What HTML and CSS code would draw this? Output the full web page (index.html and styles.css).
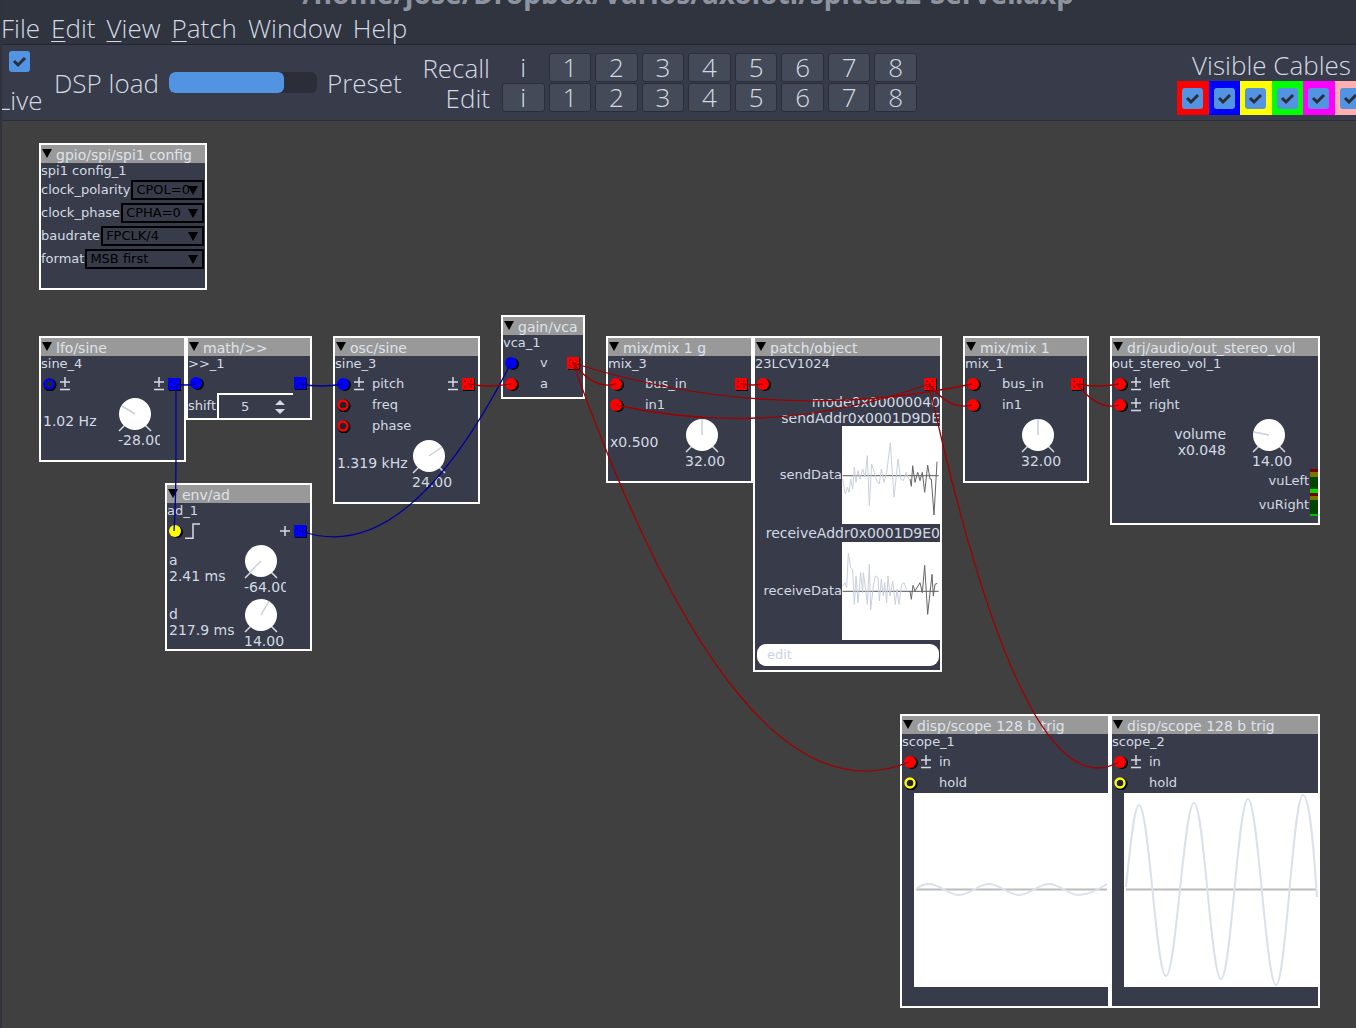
FILE: index.html
```html
<!DOCTYPE html>
<html lang="en">
<head>
<meta charset="utf-8">
<title>spitest2-Server.axp</title>
<link rel="stylesheet" href="styles.css">
</head>
<body>
<svg class="defs" aria-hidden="true">
  <symbol id="in" viewBox="0 0 14 14"><circle class="shade" cx="8" cy="8" r="6"/><circle cx="6" cy="7" r="6" fill="currentColor"/></symbol>
  <symbol id="in-open" viewBox="0 0 14 14"><circle cx="7" cy="8" r="5" fill="none" stroke="#000" stroke-width="3"/><circle cx="6" cy="7" r="4.5" fill="#20222c" stroke="currentColor" stroke-width="2.4"/></symbol>
  <symbol id="out" viewBox="0 0 14 14"><path class="shade" d="M2 2h12v12H2z"/><path d="M1 1h12v12H1z" fill="currentColor"/><path d="M3.500 3.500h1.500v1.500H3.500zM9 3.500h1.500v1.500H9zM3.500 9h1.500v1.500H3.500zM9 9h1.500v1.500H9zM6.300 6.300h1.500v1.500H6.300z" fill="#000" opacity=".55"/></symbol>
  <symbol id="pm" viewBox="0 0 12 14"><path d="M6 0v10M1 5h10M1 12.500h10" fill="none" stroke="#d3dae3" stroke-width="1.5"/></symbol>
  <symbol id="plus" viewBox="0 0 12 14"><path d="M6 2v10M1 7h10" fill="none" stroke="#d3dae3" stroke-width="1.5"/></symbol>
  <symbol id="step" viewBox="0 0 16 16"><path d="M0 15.300h8V1h7" fill="none" stroke="#d3dae3" stroke-width="1.5"/></symbol>
  <symbol id="knob" viewBox="0 0 40 37"><path d="M4 36l6-6M36 36l-6-6" stroke="#d3dae3" stroke-width="1.5"/><circle cx="20" cy="19" r="16" fill="#fff"/></symbol>
</svg>

<header class="titlebar">/home/jose/Dropbox/Varios/axoloti/spitest2-Server.axp</header>
<nav class="menubar">
  <button>File</button>
  <button><u>E</u>dit</button>
  <button><u>V</u>iew</button>
  <button><u>P</u>atch</button>
  <button>Window</button>
  <button>Help</button>
</nav>

<section class="toolbar">
  <label class="live"><input class="check" type="checkbox" checked><span>Live</span></label>
  <label class="dsp">DSP load <progress value="78" max="100"></progress></label>
  <span class="preset">Preset</span>
  <div class="preset-labels"><span>Recall</span><span>Edit</span></div>
  <div class="presets">
    <button class="flat">i</button><button>1</button><button>2</button><button>3</button><button>4</button><button>5</button><button>6</button><button>7</button><button>8</button>
    <button>i</button><button>1</button><button>2</button><button>3</button><button>4</button><button>5</button><button>6</button><button>7</button><button>8</button>
  </div>
  <fieldset class="cables-filter">
    <legend>Visible Cables</legend>
    <div class="swatches">
      <span class="sw-red"><input class="check" type="checkbox" aria-label="Red" checked></span>
      <span class="sw-blue"><input class="check" type="checkbox" aria-label="Blue" checked></span>
      <span class="sw-yellow"><input class="check" type="checkbox" aria-label="Yellow" checked></span>
      <span class="sw-green"><input class="check" type="checkbox" aria-label="Green" checked></span>
      <span class="sw-magenta"><input class="check" type="checkbox" aria-label="Magenta" checked></span>
      <span class="sw-pink"><input class="check" type="checkbox" aria-label="Pink" checked></span>
    </div>
  </fieldset>
</section>

<main class="canvas">
  <article class="node n-spi">
    <h2>gpio/spi/spi1 config</h2>
    <p class="name">spi1 config_1</p>
    <div class="attrs">
      <label>clock_polarity<span class="drop"><select><option>CPOL=0</option></select></span></label>
      <label>clock_phase<span class="drop"><select><option>CPHA=0</option></select></span></label>
      <label>baudrate<span class="drop"><select><option>FPCLK/4</option></select></span></label>
      <label>format<span class="drop"><select><option>MSB first</option></select></span></label>
    </div>
  </article>

  <article class="node n-lfo">
    <h2>lfo/sine</h2>
    <p class="name">sine_4</p>
    <div class="io"><svg class="port blue"><use href="#in-open"/></svg><svg class="sign"><use href="#pm"/></svg><span></span><svg class="sign"><use href="#pm"/></svg><svg class="port blue"><use href="#out"/></svg></div>
    <div class="param"><div class="read">1.02 Hz</div><div class="dial"><svg><use href="#knob"/><path class="needle" d="M20 19L7 11"/></svg><output>-28.00</output></div></div>
  </article>

  <article class="node n-math">
    <h2>math/&gt;&gt;</h2>
    <p class="name">&gt;&gt;_1</p>
    <div class="io"><svg class="port blue"><use href="#in"/></svg><span></span><svg class="port blue"><use href="#out"/></svg></div>
    <label class="shift">shift<span class="spin"><input type="number" value="5"><svg viewBox="0 0 10 14"><path d="M0 5L5 0L10 5zM0 9L5 14L10 9z" fill="#d3dae3"/></svg></span></label>
  </article>

  <article class="node n-osc">
    <h2>osc/sine</h2>
    <p class="name">sine_3</p>
    <div class="io"><svg class="port blue"><use href="#in"/></svg><svg class="sign"><use href="#pm"/></svg><span>pitch</span><svg class="sign"><use href="#pm"/></svg><svg class="port red"><use href="#out"/></svg></div>
    <div class="io"><svg class="port red"><use href="#in-open"/></svg><i class="sign"></i><span>freq</span></div>
    <div class="io"><svg class="port red"><use href="#in-open"/></svg><i class="sign"></i><span>phase</span></div>
    <div class="param"><div class="read">1.319 kHz</div><div class="dial"><svg><use href="#knob"/><path class="needle" d="M20 19L33 10"/></svg><output>24.00</output></div></div>
  </article>

  <article class="node n-vca">
    <h2>gain/vca</h2>
    <p class="name">vca_1</p>
    <div class="io"><svg class="port blue"><use href="#in"/></svg><i class="sign"></i><span>v</span><svg class="port red"><use href="#out"/></svg></div>
    <div class="io"><svg class="port red"><use href="#in"/></svg><i class="sign"></i><span>a</span></div>
  </article>

  <article class="node n-mix3">
    <h2>mix/mix 1 g</h2>
    <p class="name">mix_3</p>
    <div class="io"><svg class="port red"><use href="#in"/></svg><i class="sign"></i><span>bus_in</span><svg class="port red"><use href="#out"/></svg></div>
    <div class="io"><svg class="port red"><use href="#in"/></svg><i class="sign"></i><span>in1</span></div>
    <div class="param"><div class="read">x0.500</div><div class="dial"><svg><use href="#knob"/><path class="needle" d="M20 19V3"/></svg><output>32.00</output></div></div>
  </article>

  <article class="node n-patch">
    <h2>patch/object</h2>
    <p class="name">23LCV1024</p>
    <div class="io"><svg class="port red"><use href="#in"/></svg><span></span><svg class="port red"><use href="#out"/></svg></div>
    <p class="reg">mode0x00000040</p>
    <p class="reg">sendAddr0x0001D9DE</p>
    <div class="plot"><span>sendData</span>
      <svg viewBox="276 -9 294 294"><path class="axis" d="M278 140H566"/>
        <polyline class="trace" points="278,150 286,195 292,175 297,190 302,150 308,180 313,115 318,160 324,125 330,150 338,120 345,145 352,80 358,230 365,105 373,130 380,155 388,165 394,120 402,160 410,130 421,42 432,205 438,150 444,90 452,150 460,155 468,130 476,150"/>
        <polyline class="trace dark" points="480,150 484,172 488,110 495,160 503,130 510,155 517,130 524,190 533,108 540,150 544,150 552,258 561,98"/></svg></div>
    <p class="reg addr">receiveAddr0x0001D9E0</p>
    <div class="plot"><span>receiveData</span>
      <svg viewBox="276 338 294 294"><path class="axis" d="M278 486H566"/>
        <polyline class="trace" points="278,470 285,460 290,475 295,372 302,415 308,420 313,525 318,440 324,520 332,430 338,490 340,430 347,480 352,525 358,405 362,542 370,470 376,440 384,445 388,515 394,450 400,500 404,460 410,520 414,440 420,500 428,455 436,525 441,480 447,525 455,465 462,460 470,480"/>
        <polyline class="trace dark" points="480,485 484,510 489,468 495,485 510,460 517,490 524,408 533,555 546,435 550,500 555,465 562,462"/></svg></div>
    <button class="edit">edit</button>
  </article>

  <article class="node n-mix1">
    <h2>mix/mix 1</h2>
    <p class="name">mix_1</p>
    <div class="io"><svg class="port red"><use href="#in"/></svg><i class="sign"></i><span>bus_in</span><svg class="port red"><use href="#out"/></svg></div>
    <div class="io"><svg class="port red"><use href="#in"/></svg><i class="sign"></i><span>in1</span></div>
    <div class="param"><div class="read"></div><div class="dial"><svg><use href="#knob"/><path class="needle" d="M20 19V3"/></svg><output>32.00</output></div></div>
  </article>

  <article class="node n-vol">
    <h2>drj/audio/out_stereo_vol</h2>
    <p class="name">out_stereo_vol_1</p>
    <div class="io"><svg class="port red"><use href="#in"/></svg><svg class="sign"><use href="#pm"/></svg><span>left</span></div>
    <div class="io"><svg class="port red"><use href="#in"/></svg><svg class="sign"><use href="#pm"/></svg><span>right</span></div>
    <div class="param"><div class="read end">volume<br>x0.048</div><div class="dial"><svg><use href="#knob"/><path class="needle" d="M20 19L5 16"/></svg><output>14.00</output></div></div>
    <div class="vu">vuLeft<svg viewBox="0 0 8 24"><path fill="#700" d="M0 0h8v3H0z"/><path fill="#770" d="M0 3h8v5H0z"/><path fill="#040" d="M0 8h8v12H0z"/><path fill="#0d0" d="M0 20h8v4H0z"/></svg></div>
    <div class="vu">vuRight<svg viewBox="0 0 8 24"><path fill="#700" d="M0 0h8v3H0z"/><path fill="#770" d="M0 3h8v4H0z"/><path fill="#040" d="M0 7h8v14H0z"/><path fill="#0b0" d="M0 21h8v2H0z"/></svg></div>
  </article>

  <article class="node n-env">
    <h2>env/ad</h2>
    <p class="name">ad_1</p>
    <div class="io"><svg class="port yellow"><use href="#in"/></svg><svg class="step"><use href="#step"/></svg><span></span><svg class="sign"><use href="#plus"/></svg><svg class="port blue"><use href="#out"/></svg></div>
    <div class="param"><div class="read">a<br>2.41 ms</div><div class="dial"><svg><use href="#knob"/><path class="needle" d="M20 19L9 30"/></svg><output>-64.00</output></div></div>
    <div class="param"><div class="read">d<br>217.9 ms</div><div class="dial"><svg><use href="#knob"/><path class="needle" d="M20 19L28 5"/></svg><output>14.00</output></div></div>
  </article>

  <article class="node n-scope1">
    <h2>disp/scope 128 b trig</h2>
    <p class="name">scope_1</p>
    <div class="io"><svg class="port red"><use href="#in"/></svg><svg class="sign"><use href="#pm"/></svg><span>in</span></div>
    <div class="io"><svg class="port yellow"><use href="#in-open"/></svg><i class="sign"></i><span>hold</span></div>
    <svg class="scope" viewBox="0 0 194 194"><path class="base" d="M2 96.500H193"/><path class="wave" d="M2 96Q8 91 15 91C26 91 34 102 45 102S64 91 75 91S94 102 105 102S124 91 135 91S154 102 165 102Q176 102 193 91"/></svg>
  </article>

  <article class="node n-scope2">
    <h2>disp/scope 128 b trig</h2>
    <p class="name">scope_2</p>
    <div class="io"><svg class="port red"><use href="#in"/></svg><svg class="sign"><use href="#pm"/></svg><span>in</span></div>
    <div class="io"><svg class="port yellow"><use href="#in-open"/></svg><i class="sign"></i><span>hold</span></div>
    <svg class="scope" viewBox="0 0 194 194"><path class="base" d="M2 96.500H193"/><path class="wave" d="M2 94C6 58 10 12 15 12C25 12 32 183 42 183S60 10 70 10S87 186 97 186S114 6 124 6S142 192 152 192S169 2 179 2C186 2 190 60 193 104"/></svg>
  </article>

  <svg class="cables" aria-hidden="true">
    <g transform="translate(0 -121)">
      <g class="c-blue">
        <path d="M175 384Q185 386 196 384"/>
        <path d="M176 384V452Q176 500 174 531"/>
        <path d="M300 384Q321 388 343 384"/>
        <path d="M301 531Q406 569 511 363"/>
      </g>
      <g class="c-red">
        <path d="M468 384Q490 388 511 384"/>
        <path d="M573 363Q594 390 616 384"/>
        <path d="M573 363Q772 426 972 384"/>
        <path d="M573 363Q741 832 909 762"/>
        <path d="M742 384Q752 386 763 384"/>
        <path d="M929 384Q772 440 616 405"/>
        <path d="M929 384Q950 411 972 405"/>
        <path d="M929 384Q1024 816 1119 762"/>
        <path d="M1077 384Q1098 388 1119 384"/>
        <path d="M1077 384Q1098 411 1119 405"/>
      </g>
    </g>
  </svg>
</main>
</body>
</html>
```
FILE: styles.css
```css
* { box-sizing: border-box; }
html { height: 100%; }
body {
  margin: 0;
  min-height: 100%;
  display: flex;
  flex-direction: column;
  overflow: hidden;
  background: #404040;
  color: #d3dae3;
  font-family: "Open Sans", "Noto Sans", sans-serif;
  font-size: 26px;
  font-weight: 300;
}
body::before {
  content: "";
  position: absolute;
  z-index: 1;
  inset: 0 auto 0 0;
  width: 2px;
  background: #30333e;
}
button, input, select, progress { margin: 0; padding: 0; border: 0; color: inherit; font: inherit; }
p, h2 { margin: 0; font: inherit; }
.defs { position: absolute; width: 0; height: 0; }
.shade { fill: #000; }

/* window chrome */
.titlebar {
  height: 11px;
  padding-left: 20px;
  display: flex;
  align-items: flex-end;
  justify-content: center;
  overflow: hidden;
  background: #2f343f;
  color: #8d949f;
  font-family: "Noto Sans", sans-serif;
  font-size: 28px;
  font-weight: 700;
  line-height: 36px;
}
.menubar {
  height: 34px;
  padding-left: 1px;
  display: flex;
  align-items: center;
  gap: 11px;
  background: #2f343f;
  border-bottom: 1px solid #23262f;
}
.menubar button { background: none; line-height: 34px; }
.menubar u { text-decoration-thickness: 1px; text-underline-offset: 3px; }

.toolbar {
  height: 76px;
  display: flex;
  align-items: center;
  background: #383c4a;
  border-bottom: 1px solid #2b2e39;
  line-height: 30px;
}
.live { width: 54px; display: flex; flex-direction: column; gap: 13px; }
.live .check { margin-left: 9px; }
.live span { margin-left: -3px; }
.check {
  appearance: none;
  width: 21px;
  height: 21px;
  border-radius: 3px;
  background: #5294e2 url("data:image/svg+xml,%3Csvg xmlns='http://www.w3.org/2000/svg' viewBox='0 0 21 21'%3E%3Cpath d='M5 10l4 4 7-7' fill='none' stroke='%232b2e39' stroke-width='3'/%3E%3C/svg%3E");
}
.dsp { width: 263px; display: flex; align-items: center; justify-content: space-between; }
progress {
  appearance: none;
  width: 148px;
  height: 21px;
  border-radius: 6px;
  overflow: hidden;
  background: #2b2e39;
}
progress::-webkit-progress-bar { background: #2b2e39; }
progress::-webkit-progress-value { background: #5294e2; border-radius: 6px; }
.preset { width: 87px; padding-left: 10px; }
.preset-labels { width: 86px; display: flex; flex-direction: column; text-align: right; }
.presets {
  width: 415px;
  margin-left: 12px;
  display: grid;
  grid-template-columns: repeat(9, 1fr);
  gap: 1px 4px;
}
.presets button {
  height: 29px;
  border: 1px solid #2b2e39;
  border-radius: 3px;
  background: #444a58;
  line-height: 27px;
}
.presets .flat { background: none; border-color: transparent; }
.cables-filter { width: 189px; margin: 0 -10px 0 auto; padding: 0; border: 0; }
.cables-filter legend { width: 100%; padding: 0; text-align: center; line-height: 31px; }
.swatches { display: grid; grid-template-columns: repeat(6, 1fr); }
.swatches span { height: 34px; display: flex; align-items: center; justify-content: center; }
.sw-red { background: #f00; }
.sw-blue { background: #00f; }
.sw-yellow { background: #ff0; }
.sw-green { background: #0f0; }
.sw-magenta { background: #f0f; }
.sw-pink { background: #ffafaf; }

/* patch canvas */
.canvas {
  position: relative;
  flex: 1;
  min-height: 906px;
  font-family: "DejaVu Sans", sans-serif;
  font-size: 13px;
  font-weight: 400;
  line-height: 16px;
}
.cables { position: absolute; inset: 0; width: 100%; height: 100%; pointer-events: none; }
.cables path { fill: none; stroke-width: 1.3; }
.c-blue { stroke: #0000a0; }
.c-red { stroke: #a00000; }

.node {
  position: absolute;
  display: flex;
  flex-direction: column;
  border: 2px solid #fff;
  background: #383c4a;
  white-space: nowrap;
}
.n-spi { left: 39px; top: 22px; width: 168px; height: 147px; }
.n-lfo { left: 39px; top: 215px; width: 147px; height: 126px; }
.n-math { left: 186px; top: 215px; width: 126px; height: 84px; }
.n-osc { left: 333px; top: 215px; width: 147px; height: 168px; }
.n-vca { left: 501px; top: 194px; width: 84px; height: 84px; }
.n-mix3 { left: 606px; top: 215px; width: 147px; height: 147px; }
.n-patch { left: 753px; top: 215px; width: 189px; height: 336px; }
.n-mix1 { left: 963px; top: 215px; width: 126px; height: 147px; }
.n-vol { left: 1110px; top: 215px; width: 210px; height: 189px; }
.n-env { left: 165px; top: 362px; width: 147px; height: 168px; }
.n-scope1 { left: 900px; top: 593px; width: 210px; height: 294px; }
.n-scope2 { left: 1110px; top: 593px; width: 210px; height: 294px; }

.node h2 {
  height: 18px;
  display: flex;
  align-items: center;
  gap: 4px;
  padding: 2px 0 0 1px;
  background: #999;
  color: #dde3ea;
  font-size: 14px;
}
.node h2::before {
  content: "";
  margin-top: -4px;
  border: 5px solid transparent;
  border-top: 9px solid #000;
  border-bottom: 0;
}
.name { height: 17px; }
.io { height: 21px; padding: 0 3px 0 2px; display: flex; align-items: center; }
.io span { flex: 1; padding-left: 7px; }
.port { width: 14px; height: 14px; }
.sign { width: 12px; height: 14px; margin: 0 2px; }
.io .sign + span { margin-left: -2px; }
.step { width: 16px; height: 16px; margin-left: 2px; }
.red { color: #f00; }
.blue { color: #00f; }
.yellow { color: #ff0; }

.param { height: 54px; padding: 0 24px 0 2px; display: flex; align-items: center; font-size: 14px; }
.read { flex: 1; min-width: 0; }
.read.end { text-align: right; padding-right: 23px; }
.dial { width: 45px; }
.dial svg { display: block; width: 40px; height: 37px; }
.dial output { display: block; margin-left: 3px; overflow: hidden; }
.needle { stroke: #c8d0dc; stroke-width: 1.5; }

.attrs { display: flex; flex-direction: column; gap: 3px; }
.attrs label { height: 20px; display: flex; align-items: center; gap: 1px; }
.drop { position: relative; flex: 1; display: flex; height: 20px; margin-right: 1px; border: 2px solid #000; color: #000; }
.drop select { appearance: none; width: 100%; min-width: 0; padding-left: 3px; background: none; }
.drop::after {
  content: "";
  position: absolute;
  right: 4px;
  top: 4px;
  border: 5px solid transparent;
  border-top: 9px solid #000;
  border-bottom: 0;
}
.shift { height: 25px; display: flex; align-items: center; gap: 1px; }
.spin { width: 76px; height: 25px; display: flex; align-items: center; border: solid #fff; border-width: 2px 0 0 2px; }
.spin input { appearance: textfield; width: 52px; height: 20px; background: none; text-align: center; }
.spin input::-webkit-inner-spin-button { appearance: none; margin: 0; }
.spin svg { width: 10px; height: 14px; margin-left: 4px; }

.reg { font-size: 14px; text-align: right; }
.reg.addr { height: 18px; line-height: 18px; }
.plot { height: 98px; display: flex; align-items: center; justify-content: flex-end; }
.plot svg { width: 98px; height: 98px; background: #fff; }
.trace { fill: none; stroke: #c8d0de; stroke-width: 3; }
.trace.dark { stroke: #666; }
.axis { stroke: #777; stroke-width: 4; }
.edit {
  height: 22px;
  margin: 4px 1px 0 2px;
  padding-left: 10px;
  border-radius: 9px;
  background: #fff;
  color: #ccd3df;
  text-align: left;
}
.vu { height: 24px; display: flex; align-items: center; justify-content: flex-end; gap: 1px; }
.vu svg { width: 8px; height: 24px; }
.scope { align-self: flex-end; width: 194px; height: 194px; background: #fff; }
.base { stroke: #bbb; stroke-width: 2; }
.wave { fill: none; stroke: #dbe1ea; stroke-width: 2; }
```
